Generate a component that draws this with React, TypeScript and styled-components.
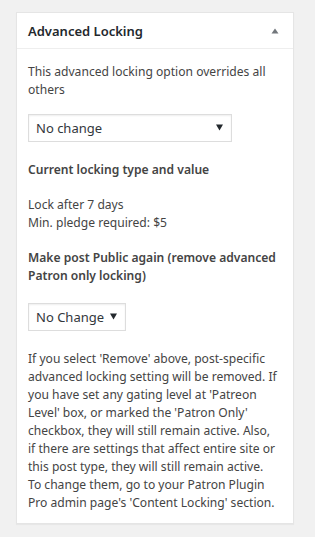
import * as React from "react";
import styled, { createGlobalStyle } from "styled-components";

const GlobalStyle = createGlobalStyle`
    html, body {
        margin: 0;
        padding: 0;
        background: #f1f1f1;
    }
    body {
        font-family: "Noto Sans", "Open Sans", sans-serif;
        font-size: 12.1px;
        color: #444;
    }
`;

const Page = styled.div`
    padding: 12px 21px 13px 16px;
`;

const StyledPostbox = styled.div`
    background: #fff;
    border: 1px solid #e5e5e5;
    box-shadow: 0 1px 1px rgba(0, 0, 0, 0.04);
`;

const StyledHeader = styled.div`
    display: flex;
    justify-content: space-between;
    align-items: center;
    height: 35px;
    padding: 0 14px 0 11px;
    border-bottom: 1px solid #eee;
`;

const StyledTitle = styled.h2`
    margin: 0;
    font-size: 13px;
    font-weight: 600;
    color: #23282d;
`;

const StyledToggle = styled.span`
    display: flex;
    color: #72777c;
`;

const StyledInside = styled.div`
    display: flex;
    flex-direction: column;
    align-items: flex-start;
    padding: 14px 15px 11px 11px;
`;

const StyledText = styled.p<{ $gap?: number }>`
    margin: ${(p) => p.$gap ?? 0}px 0 0;
    line-height: 18px;
`;

const StyledLabel = styled.p<{ $gap?: number }>`
    margin: ${(p) => p.$gap ?? 0}px 0 0;
    line-height: 18px;
    font-weight: 600;
`;

const StyledSelectWrap = styled.div<{ $width: number; $gap: number }>`
    position: relative;
    width: ${(p) => p.$width}px;
    margin-top: ${(p) => p.$gap}px;
`;

const StyledSelect = styled.select`
    appearance: none;
    width: 100%;
    height: 28px;
    margin: 0;
    padding: 0 20px 0 7px;
    border: 1px solid #ddd;
    border-radius: 0;
    box-shadow: inset 0 1px 2px rgba(0, 0, 0, 0.07);
    background: #fff;
    font-family: inherit;
    font-size: 13px;
    color: #32373c;
    outline: none;
`;

const StyledSelectArrow = styled.svg`
    position: absolute;
    right: 9px;
    top: 10px;
    pointer-events: none;
`;

function Select({ width, gap, value }: { width: number; gap: number; value: string }) {
    return (
        <StyledSelectWrap $width={width} $gap={gap}>
            <StyledSelect defaultValue={value}>
                <option>{value}</option>
            </StyledSelect>
            <StyledSelectArrow width="7" height="7" viewBox="0 0 7 7">
                <path d="M0 0.5h7L3.5 6.5z" fill="#23282d" />
            </StyledSelectArrow>
        </StyledSelectWrap>
    );
}

export default function App() {
    return (
        <Page>
            <GlobalStyle />
            <StyledPostbox>
                <StyledHeader>
                    <StyledTitle>Advanced Locking</StyledTitle>
                    <StyledToggle>
                        <svg width="8" height="6" viewBox="0 0 8 6">
                            <path d="M0.5 5.5L4 0.5l3.5 5z" fill="#72777c" />
                        </svg>
                    </StyledToggle>
                </StyledHeader>
                <StyledInside>
                    <StyledText>This advanced locking option overrides all others</StyledText>
                    <Select width={204} gap={15} value="No change" />
                    <StyledLabel $gap={19}>Current locking type and value</StyledLabel>
                    <StyledText $gap={17}>
                        Lock after 7 days
                        <br />
                        Min. pledge required: $5
                    </StyledText>
                    <StyledLabel $gap={17}>Make post Public again (remove advanced Patron only locking)</StyledLabel>
                    <Select width={98} gap={18} value="No Change" />
                    <StyledText $gap={19}>
                        If you select 'Remove' above, post-specific advanced locking setting will be removed. If
                        you have set any gating level at 'Patreon Level' box, or marked the 'Patron Only'
                        checkbox, they will still remain active. Also, if there are settings that affect entire
                        site or this post type, they will still remain active. To change them, go to your Patron
                        Plugin Pro admin page's 'Content Locking' section.
                    </StyledText>
                </StyledInside>
            </StyledPostbox>
        </Page>
    );
}
